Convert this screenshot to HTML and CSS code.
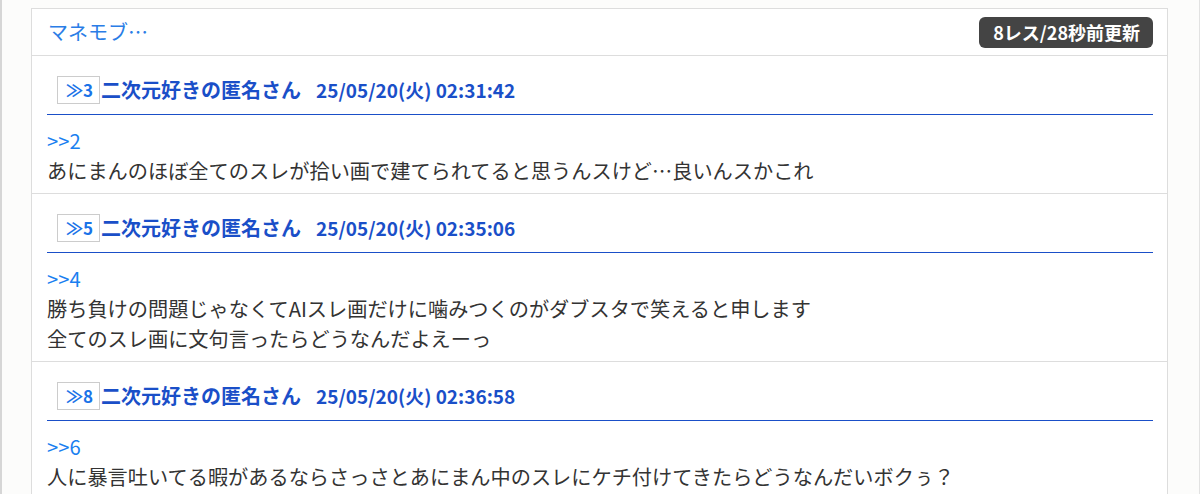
FILE: index.html
```html
<!DOCTYPE html>
<html lang="ja">
<head>
<meta charset="utf-8">
<title>マネモブ…</title>
<link rel="stylesheet" href="styles.css">
</head>
<body>
<div class="page">
  <div class="thread">
    <div class="thread-head">
      <a class="thread-title">マネモブ…</a>
      <span class="badge">8レス/28秒前更新</span>
    </div>
    <div class="post">
      <div class="post-head">
        <span class="num">≫3</span>
        <span class="name">二次元好きの匿名さん</span>
        <span class="date">25/05/20(火) 02:31:42</span>
      </div>
      <div class="post-body">
        <a class="anchor">&gt;&gt;2</a>
        <p>あにまんのほぼ全てのスレが拾い画で建てられてると思うんスけど…良いんスかこれ</p>
      </div>
    </div>
    <div class="post">
      <div class="post-head">
        <span class="num">≫5</span>
        <span class="name">二次元好きの匿名さん</span>
        <span class="date">25/05/20(火) 02:35:06</span>
      </div>
      <div class="post-body">
        <a class="anchor">&gt;&gt;4</a>
        <p>勝ち負けの問題じゃなくてAIスレ画だけに噛みつくのがダブスタで笑えると申します</p>
        <p>全てのスレ画に文句言ったらどうなんだよえーっ</p>
      </div>
    </div>
    <div class="post">
      <div class="post-head">
        <span class="num">≫8</span>
        <span class="name">二次元好きの匿名さん</span>
        <span class="date">25/05/20(火) 02:36:58</span>
      </div>
      <div class="post-body">
        <a class="anchor">&gt;&gt;6</a>
        <p>人に暴言吐いてる暇があるならさっさとあにまん中のスレにケチ付けてきたらどうなんだいボクぅ？</p>
      </div>
    </div>
  </div>
</div>
</body>
</html>
```

FILE: styles.css
```css
* { box-sizing: border-box; }
html, body { margin: 0; padding: 0; }
body {
  font-family: "Noto Sans CJK JP", "Noto Sans", sans-serif;
  background: #fcfcfb;
  color: #333;
  height: 494px;
  overflow: hidden;
}
.page {
  border-left: 2px solid #d6d6d6;
  border-right: 1px solid #e2e2e2;
  padding: 8px 31px 0 29px;
  min-height: 494px;
}
.thread {
  background: #fff;
  border: 1px solid #ddd;
  border-bottom: none;
}
.thread-head {
  display: flex;
  justify-content: space-between;
  align-items: center;
  padding: 7px 14px 7px 16px;
  border-bottom: 1px solid #ddd;
  height: 47px;
}
.thread-title {
  color: #2a7de6;
  font-size: 20px;
  line-height: 30px;
}
.badge {
  background: #444;
  color: #fff;
  font-weight: bold;
  font-size: 18px;
  line-height: 31px;
  padding: 0 13px 0 14px;
  border-radius: 6px;
}
.post {
  padding: 0 14px 7px 15px;
  border-bottom: 1px solid #ddd;
}
.post-head {
  display: flex;
  align-items: center;
  padding: 20px 0 10px 10px;
  border-bottom: 1px solid #1a4fc8;
  margin-bottom: 11px;
  font-weight: bold;
  font-size: 19px;
  line-height: 28px;
}
.num {
  border: 1px solid #ccc;
  color: #1a73e8;
  font-size: 17px;
  padding: 0 4px 0 8px;
  height: 28px;
  line-height: 26px;
  width: 43px;
}
.name {
  color: #1a4fc8;
  font-size: 20px;
  margin-left: 1px;
}
.date {
  color: #1a4fc8;
  margin-left: 15px;
}
.post-body {
  font-size: 20.2px;
  line-height: 30px;
}
.anchor {
  display: block;
  color: #1a7ff0;
}
.post-body p {
  margin: 0;
  color: #333;
}
```
